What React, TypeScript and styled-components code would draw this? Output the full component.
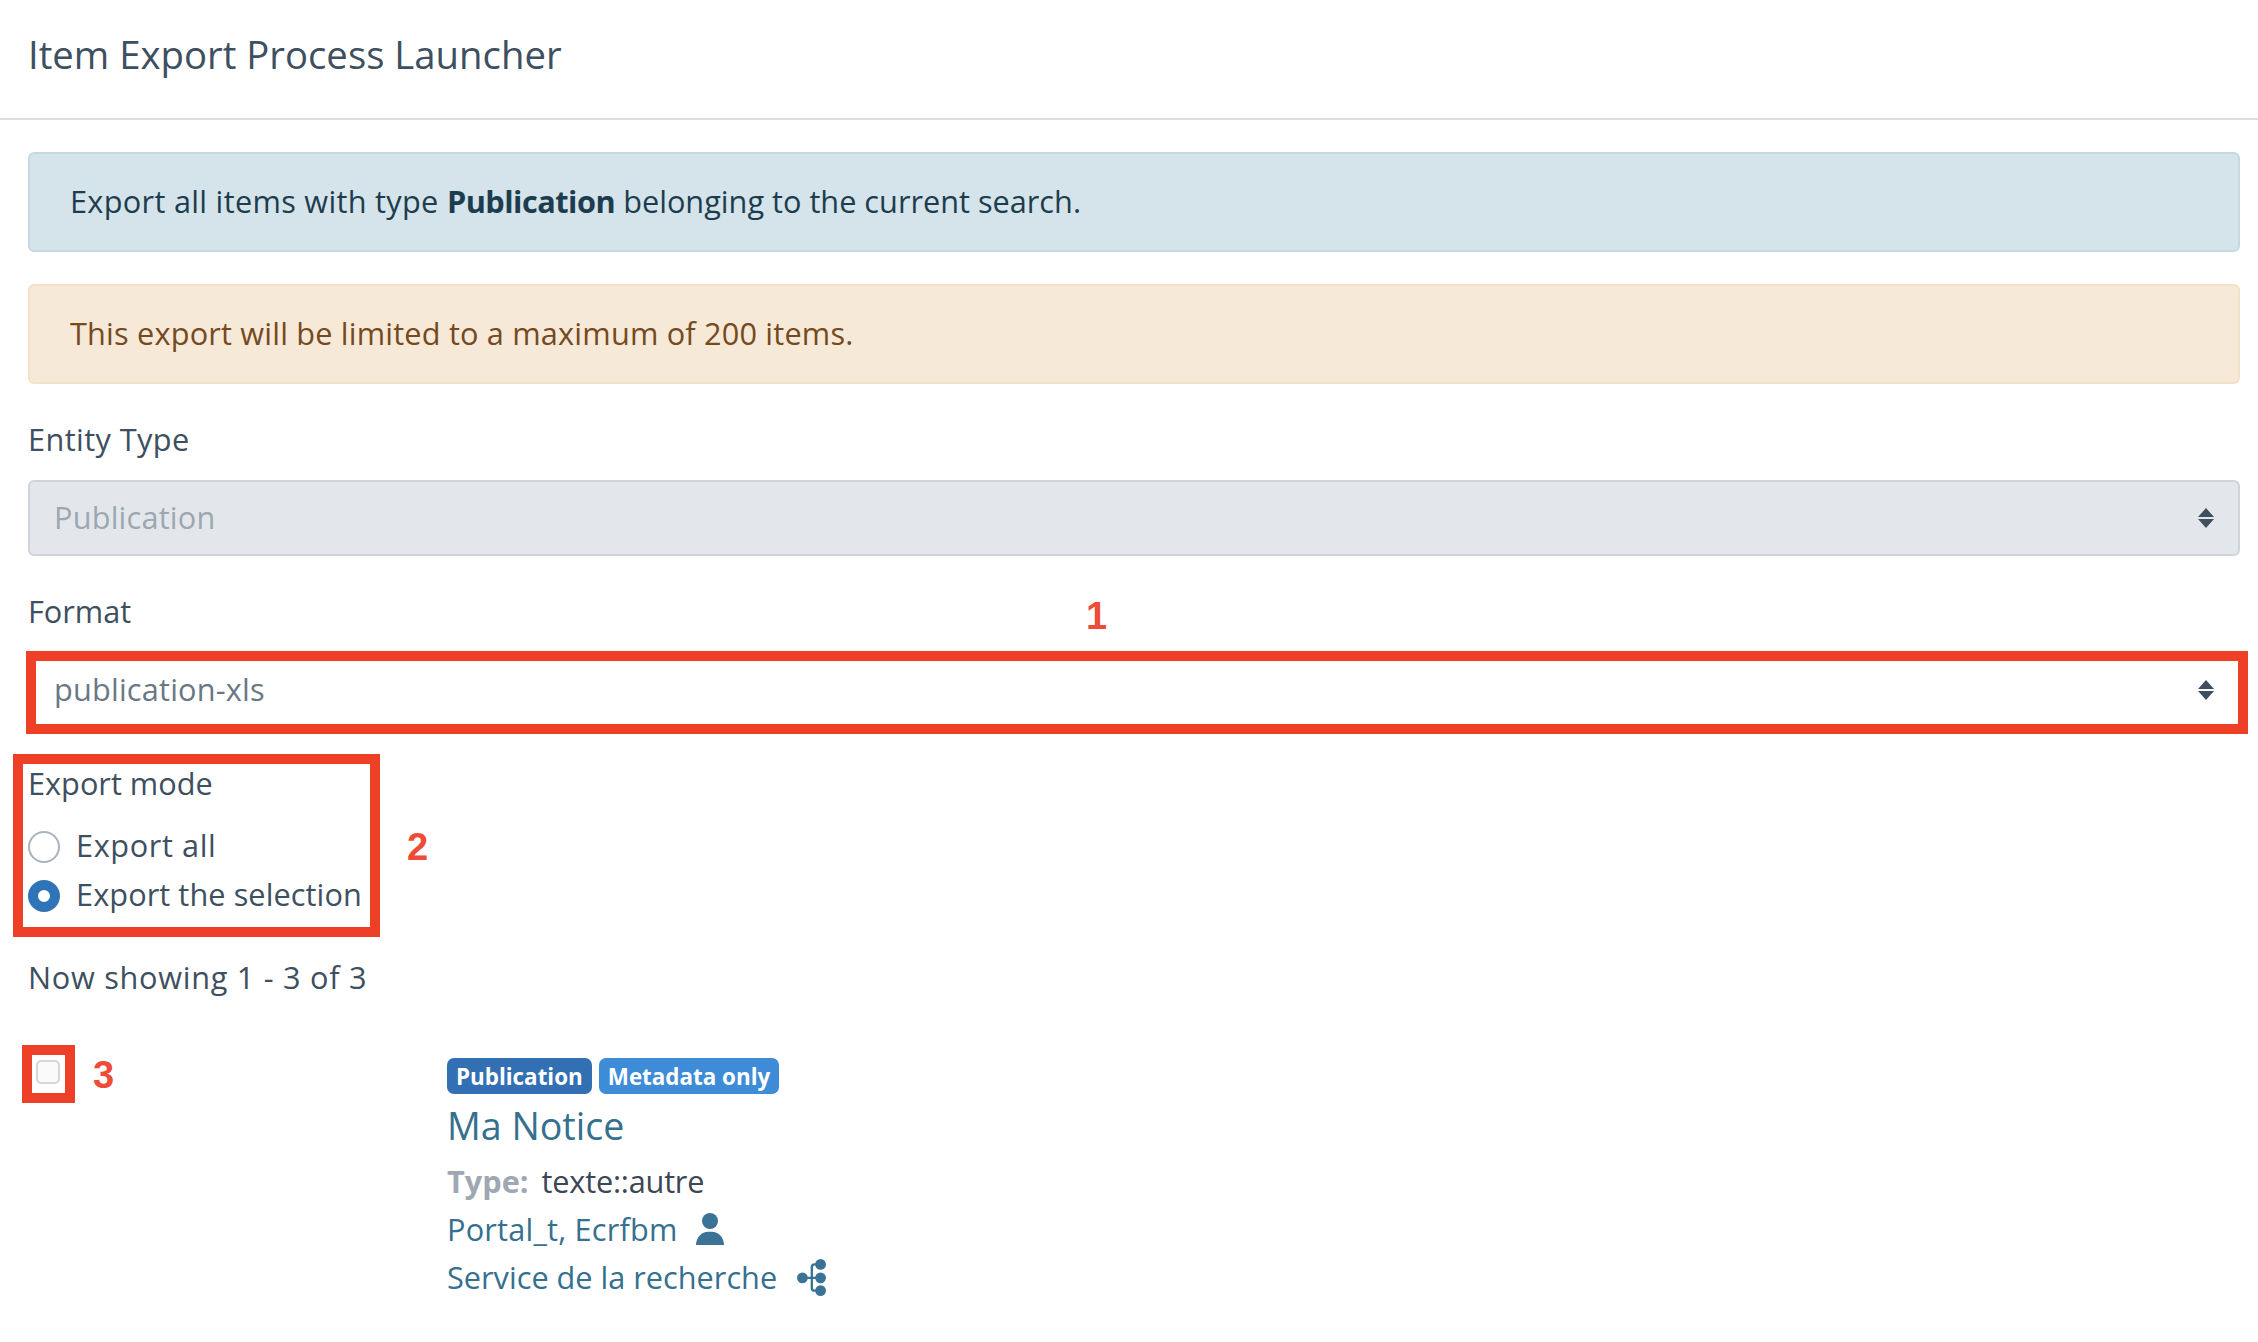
import React from 'react';
import styled, { createGlobalStyle } from 'styled-components';

const Global = createGlobalStyle`
  html, body { margin: 0; padding: 0; background: #fff; }
  body { font-family: "Open Sans", "Noto Sans", sans-serif; font-size: 30.7px; color: #3e4f5f; }
`;

const Page = styled.div`
  width: 2258px;
  height: 1342px;
  overflow: hidden;
  background: #fff;
`;

const Header = styled.header`
  height: 120px;
  box-sizing: border-box;
  padding: 0 28px 10px;
  display: flex;
  align-items: center;
  border-bottom: 2px solid #d9e0e5;
  font-size: 38.3px;
  line-height: 1;
  color: #3e4f5f;
`;

const Body = styled.main`
  padding: 32px 18px 0 28px;
  display: flex;
  flex-direction: column;
`;

const Alert = styled.div<{ $kind: 'info' | 'warn' }>`
  height: 100px;
  box-sizing: border-box;
  display: flex;
  align-items: center;
  padding: 0 40px 3px;
  border-radius: 6px;
  border: 2px solid ${p => (p.$kind === 'info' ? '#c6d9e2' : '#f5e1c9')};
  background: ${p => (p.$kind === 'info' ? '#d5e4ea' : '#f7e9d8')};
  color: ${p => (p.$kind === 'info' ? '#1d3d4e' : '#744a1e')};
  letter-spacing: ${p => (p.$kind === 'info' ? '0' : '0.19px')};
  margin-bottom: 32px;
  white-space: pre;

  b {
    letter-spacing: -0.5px;
  }
`;

const AlertLead = styled.span`
  letter-spacing: 0.3px;
`;

const FieldLabel = styled.div<{ $spacing?: number }>`
  line-height: 46px;
  height: 46px;
  color: #3e4f5f;
  letter-spacing: ${p => p.$spacing ?? 0}px;
`;

const Field = styled.div`
  position: relative;
  display: flex;
  flex-direction: column;
  gap: 18px;
  margin-bottom: 32px;
`;

const SelectBox = styled.div<{ $disabled?: boolean }>`
  height: 76px;
  box-sizing: border-box;
  display: flex;
  align-items: center;
  justify-content: space-between;
  padding: 0 24px 0 24px;
  border-radius: 6px;
  border: 2px solid ${p => (p.$disabled ? '#ced4da' : '#d5dbe1')};
  background: ${p => (p.$disabled ? '#e3e7eb' : '#fff')};
  color: ${p => (p.$disabled ? '#9ca7b1' : '#6a7885')};
  letter-spacing: 0.2px;
`;

const SelectValue = styled.span`
  padding-bottom: 3px;
`;

const Highlight = styled.div`
  position: absolute;
  border: 10px solid #ee4027;
  box-sizing: border-box;
  pointer-events: none;
`;

const FormatHighlight = styled(Highlight)`
  left: -2px;
  right: -8px;
  top: 63px;
  height: 83px;
`;

const Callout = styled.span`
  position: absolute;
  font-family: "Liberation Sans", Arial, sans-serif;
  font-weight: 700;
  font-size: 38px;
  line-height: 1;
  color: #ee4b38;
`;

const FormatCallout = styled(Callout)`
  left: 1058px;
  top: 9px;
`;

const ModeGroup = styled.div`
  position: relative;
  display: flex;
  flex-direction: column;
  margin-bottom: 37px;
`;

const ModeHighlight = styled(Highlight)`
  left: -15px;
  top: -6px;
  width: 367px;
  height: 183px;
`;

const ModeCallout = styled(Callout)`
  left: 379px;
  top: 68px;
`;

const ModeLabel = styled(FieldLabel)`
  margin-bottom: 16px;
`;

const RadioRow = styled.label`
  display: flex;
  align-items: center;
  gap: 16px;
  height: 49px;
`;

const RadioText = styled.span<{ $spacing: number }>`
  padding-bottom: 3px;
  letter-spacing: ${p => p.$spacing}px;
`;

const Radio = styled.span<{ $on?: boolean }>`
  width: 32px;
  height: 32px;
  box-sizing: border-box;
  border-radius: 50%;
  background: #fff;
  border: ${p => (p.$on ? '10px solid #2f74b8' : '2px solid #aab2ba')};
`;

const Showing = styled.div`
  line-height: 40px;
  margin-bottom: 61px;
  letter-spacing: 0.72px;
`;

const Result = styled.div`
  position: relative;
  display: flex;
`;

const CheckCell = styled.div`
  width: 419px;
  flex: none;
  padding: 2px 0 0 8px;
  box-sizing: border-box;
`;

const Check = styled.span`
  display: block;
  width: 24px;
  height: 24px;
  box-sizing: border-box;
  border-radius: 5px;
  border: 2px solid #d3d6da;
  background: #fafafa;
`;

const CheckHighlight = styled(Highlight)`
  left: -6px;
  top: -13px;
  width: 53px;
  height: 58px;
`;

const CheckCallout = styled(Callout)`
  left: 65px;
  top: -2px;
`;

const Entry = styled.div`
  display: flex;
  flex-direction: column;
`;

const Badges = styled.div`
  display: flex;
  gap: 7px;
  height: 36px;
`;

const Badge = styled.span<{ $light?: boolean }>`
  display: flex;
  align-items: center;
  padding: 0 9px;
  border-radius: 7px;
  font-size: 22.4px;
  font-weight: 700;
  color: #fff;
  background: ${p => (p.$light ? '#3e8bd8' : '#3270b3')};
`;

const Title = styled.a`
  color: #36708f;
  font-size: 37.6px;
  line-height: 50px;
  height: 50px;
  margin-top: 7px;
`;

const Row = styled.div`
  display: flex;
  align-items: center;
  height: 48px;
  line-height: 48px;
`;

const MetaRow = styled(Row)`
  margin-top: 6px;
`;

const MetaKey = styled.span`
  font-weight: 700;
  color: #9fa8b2;
  margin-right: 13px;
`;

const MetaValue = styled.span`
  color: #3c4654;
  letter-spacing: -0.2px;
`;

const LinkText = styled.a<{ $spacing?: number }>`
  color: #36708f;
  letter-spacing: ${p => p.$spacing ?? 0}px;
`;

const IconWrap = styled.span<{ $gap: number }>`
  display: inline-flex;
  margin-left: ${p => p.$gap}px;
`;

const Arrows = () => (
  <svg width="16" height="20" viewBox="0 0 16 20" aria-hidden="true">
    <path d="M8 0 L16 9 H0 Z M0 11 H16 L8 20 Z" fill="#3e4f5f" />
  </svg>
);

const PersonIcon = () => (
  <svg width="28" height="32" viewBox="0 0 84 96" aria-hidden="true">
    <circle cx="42" cy="24" r="24" fill="#3a7396" />
    <path d="M0 96 C0 72 18 56 36 56 H48 C66 56 84 72 84 96 Z" fill="#3a7396" />
  </svg>
);

const TreeIcon = () => (
  <svg width="29" height="37" viewBox="0 0 86 110" aria-hidden="true">
    <circle cx="16" cy="56" r="16" fill="#3a7396" />
    <circle cx="70" cy="16" r="16" fill="#3a7396" />
    <circle cx="70" cy="56" r="16" fill="#3a7396" />
    <circle cx="70" cy="94" r="16" fill="#3a7396" />
    <path d="M16 56 H70 M70 16 H52 Q44 16 44 24 V86 Q44 94 52 94 H70" fill="none" stroke="#3a7396" strokeWidth="7" />
  </svg>
);

export default function App() {
  return (
    <Page>
      <Global />
      <Header>Item Export Process Launcher</Header>
      <Body>
        <Alert $kind="info">
          <AlertLead>Export all items with type </AlertLead>
          <b>Publication</b> belonging to the current search.
        </Alert>
        <Alert $kind="warn">This export will be limited to a maximum of 200 items.</Alert>
        <Field>
          <FieldLabel $spacing={0.4}>Entity Type</FieldLabel>
          <SelectBox $disabled>
            <SelectValue>Publication</SelectValue>
            <Arrows />
          </SelectBox>
        </Field>
        <Field>
          <FieldLabel>Format</FieldLabel>
          <SelectBox>
            <SelectValue>publication-xls</SelectValue>
            <Arrows />
          </SelectBox>
          <FormatHighlight />
          <FormatCallout>1</FormatCallout>
        </Field>
        <ModeGroup>
          <ModeLabel>Export mode</ModeLabel>
          <RadioRow>
            <Radio />
            <RadioText $spacing={0.6}>Export all</RadioText>
          </RadioRow>
          <RadioRow>
            <Radio $on />
            <RadioText $spacing={0.08}>Export the selection</RadioText>
          </RadioRow>
          <ModeHighlight />
          <ModeCallout>2</ModeCallout>
        </ModeGroup>
        <Showing>Now showing 1 - 3 of 3</Showing>
        <Result>
          <CheckCell>
            <Check />
          </CheckCell>
          <CheckHighlight />
          <CheckCallout>3</CheckCallout>
          <Entry>
            <Badges>
              <Badge>Publication</Badge>
              <Badge $light>Metadata only</Badge>
            </Badges>
            <Title>Ma Notice</Title>
            <MetaRow>
              <MetaKey>Type:</MetaKey>
              <MetaValue>texte::autre</MetaValue>
            </MetaRow>
            <Row>
              <LinkText $spacing={0.2}>Portal_t, Ecrfbm</LinkText>
              <IconWrap $gap={18}>
                <PersonIcon />
              </IconWrap>
            </Row>
            <Row>
              <LinkText>Service de la recherche</LinkText>
              <IconWrap $gap={20}>
                <TreeIcon />
              </IconWrap>
            </Row>
          </Entry>
        </Result>
      </Body>
    </Page>
  );
}
